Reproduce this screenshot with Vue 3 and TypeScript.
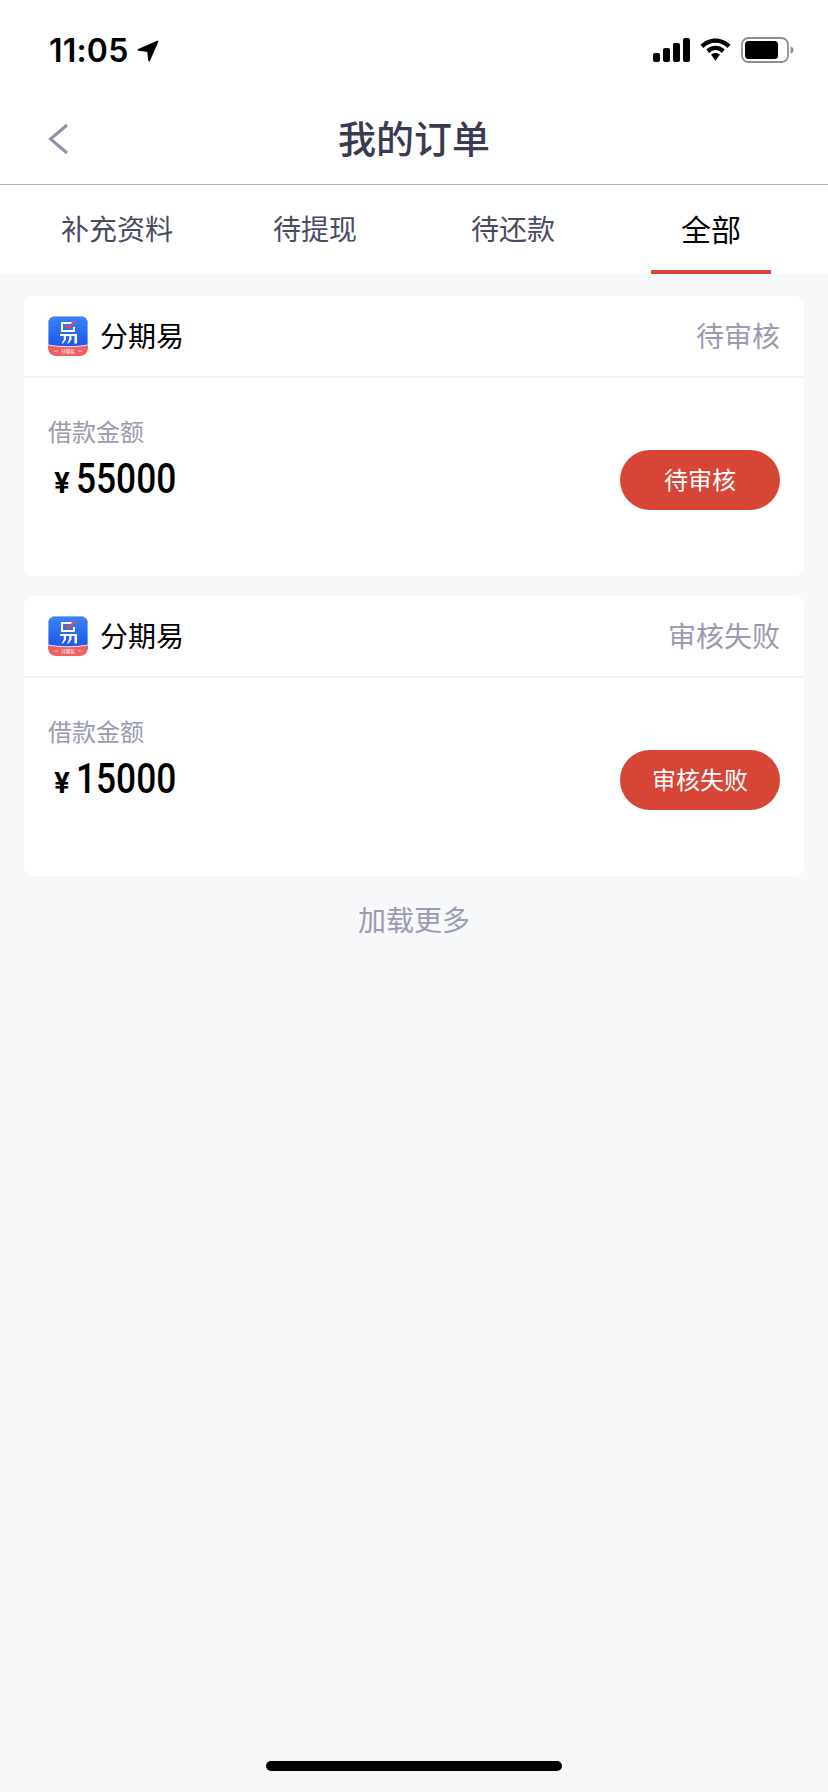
<script setup lang="ts">
interface Order {
  id: number
  status: string
  amount: string
}

const tabs = ['补充资料', '待提现', '待还款', '全部']
const activeTab = 3

const orders: Order[] = [
  { id: 1, status: '待审核', amount: '55000' },
  { id: 2, status: '审核失败', amount: '15000' },
]
</script>

<template>
  <div class="page">
    <header class="status-bar">
      <div class="clock">
        <span>11:05</span>
        <svg class="arrow" width="22" height="22" viewBox="0 0 22 22">
          <path d="M20.500 1.500 1.500 9.800 11 11.200 12.200 20.500Z" fill="#000" stroke="#000" stroke-width="1.800" stroke-linejoin="round" />
        </svg>
      </div>
      <div class="indicators">
        <svg width="37" height="24" viewBox="0 0 37 24">
          <rect x="0" y="15" width="7" height="9" rx="2" />
          <rect x="10" y="10" width="7" height="14" rx="2" />
          <rect x="20" y="5" width="7" height="19" rx="2" />
          <rect x="30" y="0" width="7" height="24" rx="2" />
        </svg>
        <svg width="31" height="24" viewBox="0 0 32 24">
          <path d="M16 0C10 0 4.500 2.400.5 6.500L3.500 10C6.700 6.600 11.100 4.500 16 4.500S25.300 6.600 28.500 10L31.500 6.500C27.500 2.400 22 0 16 0Z" />
          <path d="M16 7.500C12.300 7.500 9 9 6.500 11.500L9.500 15C11.200 13.200 13.500 12 16 12S20.800 13.200 22.500 15L25.500 11.500C23 9 19.700 7.500 16 7.500Z" />
          <path d="M16 15C14.200 15 12.700 15.700 11.500 16.800L16 23 20.500 16.800C19.300 15.700 17.800 15 16 15Z" />
        </svg>
        <svg width="53" height="26" viewBox="0 0 53 26">
          <rect x="1" y="1" width="46" height="24" rx="6.500" fill="#fff" stroke="#8e8e8e" stroke-width="1.800" />
          <rect x="4" y="4" width="33" height="18" rx="3.500" />
          <path d="M49.500 9.500C51.500 10 52.500 11.300 52.500 13S51.500 16 49.500 16.500Z" fill="#8e8e8e" />
        </svg>
      </div>
    </header>

    <nav class="nav">
      <svg class="back" width="22" height="32" viewBox="0 0 22 32">
        <path d="M20 2 3.500 16 20 30" fill="none" stroke="#8f8fa6" stroke-width="3" />
      </svg>
      <h1 class="title">我的订单</h1>
    </nav>

    <div class="tabs">
      <div
        v-for="(tab, index) in tabs"
        :key="tab"
        class="tab"
        :class="{ 'tab--active': index === activeTab }"
      >
        {{ tab }}
      </div>
    </div>

    <main class="list">
      <section v-for="order in orders" :key="order.id" class="card">
        <div class="card-head">
          <div class="brand">
            <svg class="logo" width="40" height="40" viewBox="0 0 40 40">
              <defs>
                <linearGradient :id="`logo-blue-${order.id}`" x1="0" y1="0" x2="0" y2="1">
                  <stop offset="0" stop-color="#3a85f7" />
                  <stop offset="1" stop-color="#1f55e8" />
                </linearGradient>
                <clipPath :id="`logo-clip-${order.id}`">
                  <rect width="40" height="40" rx="8" />
                </clipPath>
              </defs>
              <g :clip-path="`url(#logo-clip-${order.id})`">
                <rect width="40" height="40" fill="#ef6160" />
                <path d="M0 0H40V29Q20 32.500 0 29Z" :fill="`url(#logo-blue-${order.id})`" stroke="#fff" stroke-width="0.800" />
                <path d="M13 6H24V8H15V14H25V11H27V16H13Z" fill="#fff" />
                <path d="M17.500 9.500 20 12 27 5" fill="none" stroke="#ea4d3f" stroke-width="2" />
                <path d="M12 18H29V27.500H26.500V20H23.500V23.500L20.500 27.500H19L21.200 23.500V20H18V23.500L15 27.500H13.500L15.800 23.500V20H12Z" fill="#fff" />
                <path d="M6 35H10M30 35H34" stroke="#fff" stroke-width="0.600" />
                <text x="20" y="37" text-anchor="middle" class="logo-text">分期易</text>
              </g>
            </svg>
            <span class="brand-name">分期易</span>
          </div>
          <span class="status">{{ order.status }}</span>
        </div>
        <div class="card-body">
          <div class="amount-block">
            <div class="amount-label">借款金额</div>
            <div class="amount">
              <span class="currency">¥</span>
              <span class="value">{{ order.amount }}</span>
            </div>
          </div>
          <button class="action" type="button">{{ order.status }}</button>
        </div>
      </section>
      <div class="load-more">加载更多</div>
    </main>

    <div class="home-indicator"></div>
  </div>
</template>

<style scoped>
.page {
  width: 828px;
  height: 1792px;
  display: flex;
  flex-direction: column;
  position: relative;
  overflow: hidden;
  background: #f7f8fa;
  font-family: Inter, "Noto Sans CJK SC", sans-serif;
}

.status-bar {
  height: 88px;
  padding: 30px 34px 0 49px;
  box-sizing: border-box;
  display: flex;
  justify-content: space-between;
  align-items: flex-start;
  background: #fff;
}

.clock {
  display: flex;
  align-items: center;
  gap: 8px;
  height: 40px;
  font-size: 32px;
  font-weight: 600;
  letter-spacing: 0.2px;
  color: #000;
}

.arrow {
  margin-top: 1px;
}

.indicators {
  display: flex;
  align-items: center;
  gap: 10px;
  height: 40px;
}

.nav {
  height: 97px;
  position: relative;
  box-sizing: border-box;
  display: flex;
  align-items: center;
  justify-content: center;
  background: #fff;
  border-bottom: 1px solid #b2b2b2;
}

.title {
  margin: 0;
  font-size: 38px;
  font-weight: 500;
  color: #3a3a50;
}

.back {
  position: absolute;
  left: 47px;
  top: 35px;
}

.tabs {
  height: 89px;
  padding: 0 18px;
  box-sizing: border-box;
  display: grid;
  grid-template-columns: repeat(4, 1fr);
  background: #fff;
}

.tab {
  padding-bottom: 4px;
  display: flex;
  align-items: center;
  justify-content: center;
  position: relative;
  font-size: 28px;
  color: #4a4b60;
}

.tab--active {
  font-size: 30px;
  color: #000;
}

.tab--active::after {
  content: "";
  position: absolute;
  left: 39px;
  bottom: 0;
  width: 120px;
  height: 4px;
  background: #d8433a;
}

.list {
  padding: 22px 24px 0;
  display: flex;
  flex-direction: column;
  gap: 20px;
}

.card {
  height: 280px;
  border-radius: 8px;
  background: #fff;
}

.card-head {
  height: 82px;
  padding: 0 24px;
  box-sizing: border-box;
  display: flex;
  align-items: center;
  justify-content: space-between;
  border-bottom: 2px solid #f2f3f6;
}

.brand {
  display: flex;
  align-items: center;
  gap: 12px;
}

.logo {
  display: block;
}

.logo-text {
  font-size: 4.500px;
  fill: #fff;
}

.brand-name {
  padding-bottom: 2px;
  font-size: 28px;
  color: #000;
}

.status {
  padding-bottom: 3px;
  font-size: 28px;
  color: #9a9bb0;
}

.card-body {
  padding: 38px 24px 0;
  display: flex;
  justify-content: space-between;
  align-items: flex-start;
}

.amount-label {
  font-size: 24px;
  line-height: 34px;
  color: #9a9bb0;
}

.amount {
  display: flex;
  align-items: baseline;
  margin-top: 4px;
  padding-left: 6px;
  height: 48px;
  color: #000;
}

.currency {
  width: 22px;
  font-size: 28px;
  font-weight: 700;
}

.value {
  font-family: Roboto, sans-serif;
  font-size: 42px;
  font-weight: 500;
  display: inline-block;
  transform: scaleX(0.84);
  transform-origin: left center;
}

.action {
  width: 160px;
  height: 60px;
  margin-top: 34px;
  padding: 0 0 3px;
  border: 0;
  border-radius: 30px;
  background: #d64535;
  color: #fff;
  font-family: inherit;
  font-size: 24px;
}

.load-more {
  margin-top: 5px;
  text-align: center;
  font-size: 28px;
  line-height: 40px;
  color: #9a9bb0;
}

.home-indicator {
  position: absolute;
  left: 266px;
  bottom: 21px;
  width: 296px;
  height: 10px;
  border-radius: 5px;
  background: #000;
}
</style>

<style>
body {
  background: #f7f8fa;
}
</style>
